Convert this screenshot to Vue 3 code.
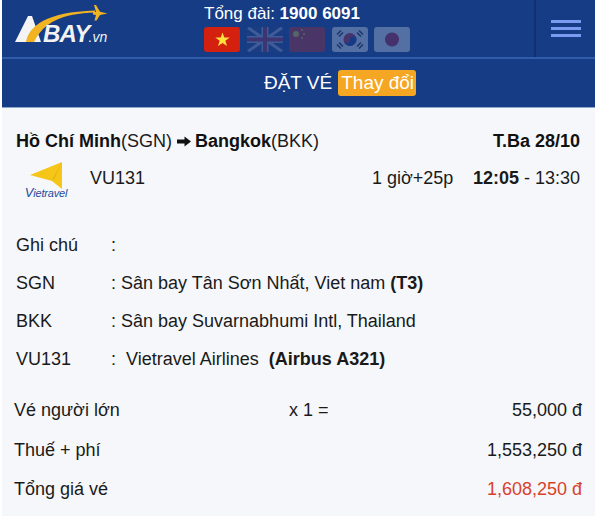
<template>
  <div class="page">
    <header class="top">
      <div class="logo">
        <svg width="110" height="50" viewBox="0 0 110 50">
          <path d="M13 42 L26 16 L30 16 L39 42 Z" fill="#f4f4f4" />
          <path d="M24 42 C27 26 44 12 93 10.5 L93 12.5 C60 13.5 42 22 32 42 Z" fill="#f2b322" />
          <path d="M92 5 L94 5 L98 11.8 L105.5 13.5 L98 15 L94.5 20.5 L92.5 20.5 L94 15 L91 14.6 L91 12 L94 12 Z" fill="#f2b322" />
          <text x="41" y="42" class="logo-text"><tspan class="logo-bay">BAY</tspan><tspan class="logo-vn" dx="-1">.vn</tspan></text>
        </svg>
      </div>
      <div class="hotline">
        <div class="phone">Tổng đài: <b>1900 6091</b></div>
        <div class="flags">
          <span class="flag vn">
            <svg width="15" height="15" viewBox="0 0 20 20"><path d="M10 0.5 L12.4 7.3 L19.6 7.3 L13.8 11.6 L16 18.8 L10 14.5 L4 18.8 L6.2 11.6 L0.4 7.3 L7.6 7.3 Z" fill="#ffe13b" /></svg>
          </span>
          <span class="flag uk dim">
            <svg width="36" height="25" viewBox="0 0 36 25">
              <rect width="36" height="25" fill="#2a3f7f" />
              <path d="M0 0 L36 25 M36 0 L0 25" stroke="#a9aec6" stroke-width="3" />
              <path d="M18 0 V25 M0 12.5 H36" stroke="#a9aec6" stroke-width="7" />
              <path d="M18 0 V25 M0 12.5 H36" stroke="#a6243f" stroke-width="4" />
            </svg>
          </span>
          <span class="flag cn dim">
            <svg width="36" height="25" viewBox="0 0 36 25">
              <rect width="36" height="25" fill="#cf2a1c" />
              <circle cx="7" cy="7" r="3" fill="#f4d323" />
              <circle cx="13" cy="3" r="1" fill="#f4d323" />
              <circle cx="15" cy="7" r="1" fill="#f4d323" />
              <circle cx="13" cy="11" r="1" fill="#f4d323" />
            </svg>
          </span>
          <span class="flag kr dim">
            <svg width="36" height="25" viewBox="0 0 36 25">
              <rect width="36" height="25" fill="#f4f4f4" />
              <circle cx="18" cy="12.5" r="6.5" fill="#c9202c" />
              <path d="M11.5 12.5 A6.5 6.5 0 0 0 24.5 12.5 A3.25 3.25 0 0 0 18 12.5 A3.25 3.25 0 0 1 11.5 12.5 Z" fill="#1c3a8c" />
              <path d="M5 7.5 L9 3.5 M7 9.5 L11 5.5 M27 3.5 L31 7.5 M25 5.5 L29 9.5 M5 17.5 L9 21.5 M7 15.5 L11 19.5 M27 21.5 L31 17.5 M25 19.5 L29 15.5" stroke="#222" stroke-width="1.5" />
            </svg>
          </span>
          <span class="flag jp dim">
            <svg width="36" height="25" viewBox="0 0 36 25">
              <rect width="36" height="25" fill="#f4f4f4" />
              <circle cx="18" cy="12.5" r="7" fill="#c3162b" />
            </svg>
          </span>
        </div>
      </div>
      <div class="menu">
        <span></span>
        <span></span>
        <span></span>
      </div>
    </header>
    <div class="title">
      <span>ĐẶT VÉ</span>
      <span class="change">Thay đổi</span>
    </div>
    <main class="body">
      <div class="route">
        <div>
          <b>Hồ Chí Minh</b>(SGN)<svg class="arrow" width="14" height="11" viewBox="0 0 14 11"><path d="M0 3.5 H7.5 V0.5 L14 5.5 L7.5 10.5 V7.5 H0 Z" fill="#111" /></svg><b>Bangkok</b>(BKK)
        </div>
        <b>T.Ba 28/10</b>
      </div>
      <div class="flight">
        <div class="airline">
          <svg width="33" height="27" viewBox="0 0 33 27">
            <path d="M0 13 L32 0 L32 27 L22 19 Z" fill="#f5c518" />
            <path d="M22 19 L32 0 L24 17 Z" fill="#dfa70d" />
          </svg>
          <span class="airline-name"><i class="airline-v">V</i>ietravel</span>
        </div>
        <div class="code">VU131</div>
        <div class="duration">1 giờ+25p</div>
        <div class="time"><b>12:05</b> - 13:30</div>
      </div>
      <div class="notes">
        <div class="note" v-for="n in notes" :key="n.key">
          <span class="note-key">{{ n.key }}</span>
          <span>: <template v-if="n.pad">&nbsp;</template>{{ n.text }}<template v-if="n.pad">&nbsp;</template> <b v-if="n.bold">{{ n.bold }}</b></span>
        </div>
      </div>
      <div class="prices">
        <div class="price" v-for="p in prices" :key="p.label">
          <span class="price-label">{{ p.label }}</span>
          <span class="price-qty">{{ p.qty }}</span>
          <span :class="{ red: p.total }">{{ p.value }}</span>
        </div>
      </div>
    </main>
  </div>
</template>

<script setup>
const notes = [
  { key: "Ghi chú", text: "" },
  { key: "SGN", text: "Sân bay Tân Sơn Nhất, Viet nam", bold: "(T3)" },
  { key: "BKK", text: "Sân bay Suvarnabhumi Intl, Thailand" },
  { key: "VU131", text: "Vietravel Airlines", bold: "(Airbus A321)", pad: true },
];
const prices = [
  { label: "Vé người lớn", qty: "x 1 =", value: "55,000 đ" },
  { label: "Thuế + phí", qty: "", value: "1,553,250 đ" },
  { label: "Tổng giá vé", qty: "", value: "1,608,250 đ", total: true },
];
</script>

<style>
html,
body {
  margin: 0;
  background: #fff;
}
</style>

<style scoped>
.page {
  width: 593px;
  height: 516px;
  margin-left: 2px;
  overflow: hidden;
  background: #f5f7fb;
  color: #1a1a1a;
  font-family: "Liberation Sans", Arial, sans-serif;
  font-size: 18px;
}
.top {
  display: flex;
  height: 57px;
  background: #153c85;
  border-bottom: 2px solid #2f5cab;
}
.logo {
  width: 194px;
  line-height: 0;
}
.logo-text {
  font-family: "Liberation Sans", sans-serif;
  font-style: italic;
  font-weight: bold;
  fill: #f2f2f2;
}
.logo-bay {
  font-size: 24px;
  letter-spacing: -0.8px;
}
.logo-vn {
  font-size: 14px;
  font-weight: normal;
}
.hotline {
  width: 338px;
  padding: 4px 0 0 8px;
  box-sizing: border-box;
  color: #fff;
}
.phone {
  line-height: 20px;
  font-size: 17px;
}
.flags {
  display: flex;
  gap: 6.5px;
  margin-top: 3px;
}
.flag {
  display: flex;
  align-items: center;
  justify-content: center;
  width: 36px;
  height: 25px;
  overflow: hidden;
  border-radius: 3px;
}
.dim {
  opacity: 0.28;
}
.vn {
  background: #d3200f;
}
.menu {
  flex: 1;
  display: flex;
  flex-direction: column;
  justify-content: center;
  align-items: center;
  gap: 4px;
  border-left: 2px solid #10306f;
}
.menu span {
  width: 30px;
  height: 3px;
  background: #7b9bf0;
}
.title {
  display: flex;
  justify-content: center;
  align-items: center;
  gap: 6px;
  height: 48px;
  padding-left: 83px;
  background: #153c85;
  color: #fff;
  font-size: 19px;
  border-bottom: 1px solid #8ea5cc;
}
.change {
  background: #f5a623;
  padding: 2px 2px 2px 3px;
  border-radius: 3px;
  line-height: 22px;
}
.body {
  padding: 0 14px;
}
.route {
  display: flex;
  justify-content: space-between;
  align-items: center;
  margin-top: 22px;
  padding-right: 1px;
  line-height: 22px;
}
.route b {
  color: #111;
}
.arrow {
  margin: 0 4px 0 5px;
}
.flight {
  display: flex;
  align-items: center;
  margin-top: 6px;
  height: 40px;
}
.airline {
  align-self: flex-start;
  width: 60px;
  padding-top: 4px;
  display: flex;
  flex-direction: column;
  align-items: center;
  line-height: 0;
}
.airline-name {
  margin-top: -2px;
  font-size: 11px;
  font-style: italic;
  letter-spacing: -0.2px;
  color: #1f4a9c;
  line-height: 11px;
}
.airline-v {
  font-size: 13px;
}
.code {
  margin-left: 14px;
  width: 282px;
}
.duration {
  width: 101px;
}
.time {
  white-space: nowrap;
}
.notes {
  margin-top: 28px;
}
.note {
  display: flex;
  height: 38px;
  align-items: center;
}
.note-key {
  width: 95px;
}
.prices {
  margin-top: 13px;
  margin-left: -2px;
  margin-right: -1px;
}
.price {
  display: flex;
  height: 39.5px;
  align-items: center;
}
.price-label {
  width: 275px;
}
.price-qty {
  flex: 1;
}
.red {
  color: #d9412b;
}
</style>
